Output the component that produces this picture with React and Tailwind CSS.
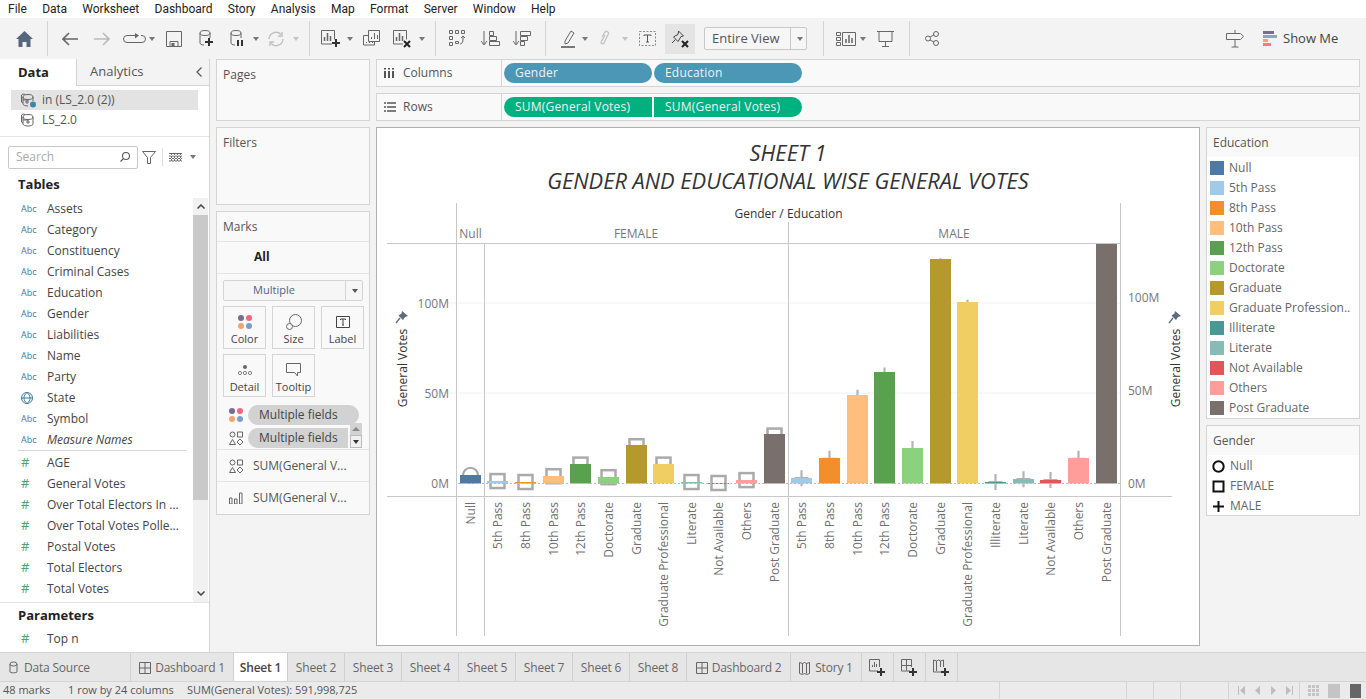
import React from 'react';

const FONT = "font-['Open_Sans','Noto_Sans',sans-serif]";

const Ic = ({ w = 16, h = 16, className = '', children, stroke = '#666', sw = 1.2 }) => (
    <svg width={w} height={h} viewBox={`0 0 ${w} ${h}`} fill="none" stroke={stroke} strokeWidth={sw} className={`shrink-0 ${className}`}>
        {children}
    </svg>
);

const Drop = ({ className = '', color = '#777' }) => (
    <svg width="6" height="4" viewBox="0 0 6 4" className={`shrink-0 ${className}`}><path d="M0 0h6L3 4z" fill={color} /></svg>
);

const Sep = ({ className = '' }) => <div className={`w-px h-[35px] bg-[#d4d4d4] shrink-0 ${className}`} />;

const Plus = ({ x, y }) => <path d={`M${x - 4} ${y}h8M${x} ${y - 4}v8`} stroke="#333" strokeWidth="2" />;
const Cross = ({ x, y }) => <path d={`M${x - 3} ${y - 3}l6 6M${x + 3} ${y - 3}l-6 6`} stroke="#222" strokeWidth="2" />;

const Toolbar = () => (
    <div className="h-[41px] bg-[#f3f3f3] flex items-center shrink-0">
        <Ic w={17} h={16} className="ml-[16px]" stroke="none"><path d="M8.500 0L17 8h-2.500v8H10.500v-5h-4v5H2.500V8H0z" fill="#56677c" /></Ic>
        <Sep className="ml-[14px]" />
        <Ic w={16} h={14} className="ml-[14px]" stroke="#666" sw={1.600}><path d="M16 7H1M7 1L1 7l6 6" /></Ic>
        <Ic w={16} h={14} className="ml-[16px]" stroke="#bbb" sw={1.600}><path d="M0 7h15M9 1l6 6-6 6" /></Ic>
        <Ic w={23} h={12} className="ml-[13px]" sw={1}><path d="M13 2.500H4a3.500 3.500 0 000 7h15a3.500 3.500 0 000-7h-1" /><path d="M12 0l4 2.500-4 3z" fill="#666" stroke="none" /></Ic>
        <Drop className="ml-[3px]" />
        <Ic w={16} h={16} className="ml-[11px]" sw={1}><path d="M.5.5h15v15H.5zM4 15.500v-5h8v5" /><path d="M5.500 12h3v3h-3z" fill="#666" stroke="none" /></Ic>
        <Ic w={15} h={17} className="ml-[17px]" sw={1}><ellipse cx="6" cy="3" rx="5" ry="2.500" /><path d="M1 3v10c0 1 1.500 2 4 2M11 3v5" /><Plus x={10} y={12} /></Ic>
        <Ic w={14} h={17} className="ml-[16px]" sw={1}><ellipse cx="6" cy="3" rx="5" ry="2.500" /><path d="M1 3v10c0 1 1.500 2 4 2M11 3v5" /><path d="M8 10v6M12 10v6" stroke="#333" strokeWidth="2" /></Ic>
        <Drop className="ml-[9px]" />
        <Ic w={18} h={16} className="ml-[8px]" stroke="#c0c0c0" sw={1.400}><path d="M2 8a7 7 0 0112-4.500M16 8a7 7 0 01-12 4.500" /><path d="M15 1v4h-4M3 15v-4h4" /></Ic>
        <Drop className="ml-[8px]" color="#c4c4c4" />
        <Sep className="ml-[10px]" />
        <Ic w={20} h={18} className="ml-[11px]" sw={1}><path d="M11 14H.5V.5h13v9" /><path d="M3.500 11V7M6.500 11V3M9.500 11V6" strokeWidth="1.500" /><Plus x={15} y={13} /></Ic>
        <Drop className="ml-[6px]" />
        <Ic w={17} h={17} className="ml-[10px]" sw={1}><path d="M5.500.5h11v11h-11zM.5 5.500H5M.5 5.500V15h11v-3" /><path d="M8.500 9V7M11.500 9V3M14.500 9V5M3.500 12v1M6.500 12v1M9.500 12v1" /></Ic>
        <Ic w={18} h={18} className="ml-[13px]" sw={1}><path d="M10 14H.5V.5h13v9" /><path d="M3.500 11V7M6.500 11V3M9.500 11V6" strokeWidth="1.500" /><Cross x={14} y={14} /></Ic>
        <Drop className="ml-[8px]" />
        <Sep className="ml-[10px]" />
        <Ic w={16} h={17} className="ml-[13px]" sw={1}><path d="M.5.5h3v3h-3zM6.500.5h3v3h-3zM12.500.5h3v3h-3zM.5 6.500h3v3h-3zM.5 12.500h3v3h-3zM6.500 13.500h3v-2h-3z" /><path d="M14 7v3c0 3-2 4-3 4" /><path d="M12 8l2-2 2 2" /></Ic>
        <Ic w={19} h={17} className="ml-[16px]" sw={1}><path d="M3 1v13M0 11l3 4 3-4" /><path d="M8.500 1.500h4v4h-4zM8.500 6.500h7v4h-7zM8.500 11.500h10v4h-10z" /></Ic>
        <Ic w={18} h={17} className="ml-[13px]" sw={1}><path d="M3 1v13M0 11l3 4 3-4" /><path d="M7.500 1.500h10v4h-10zM7.500 6.500h7v4h-7zM7.500 11.500h4v4h-4z" /></Ic>
        <Sep className="ml-[14px]" />
        <Ic w={14} h={18} className="ml-[15px]" sw={1}><path d="M4 11l6-10 3 2-6 10-3 1z" /><path d="M0 17h14" stroke="#777" strokeWidth="2" /></Ic>
        <Drop className="ml-[7px]" />
        <Ic w={12} h={17} className="ml-[11px]" stroke="#c4c4c4" sw={1.400}><path d="M3 7l3-5c1-1.500 4 0 3.500 1.500L5 13c-1 1.500-3.500.5-3-1l4-7" /></Ic>
        <Drop className="ml-[11px]" color="#c4c4c4" />
        <Ic w={17} h={15} className="ml-[11px]" sw={1}><path d="M.5.5h16v14H.5z" strokeDasharray="2 1.500" stroke="#888" /><path d="M5 5V4h7v1M8.500 4v7M7 11h3" stroke="#555" /></Ic>
        <div className="ml-[9px] w-[30px] h-[30px] bg-[#e4e4e4] flex items-center justify-center shrink-0">
            <Ic w={18} h={18} sw={1} stroke="#444"><path d="M7.500 1l5 5-2.500.5L8 10l-1 1.500-4.500-4.500L4 6l3-1.500z" /><path d="M4.500 9.500L1 13" /><Cross x={14} y={14} /></Ic>
        </div>
        <div className="ml-[9px] w-[103px] h-[23px] border border-[#c8c8c8] rounded-[2px] flex items-center shrink-0 bg-[#f6f6f6]">
            <span className="ml-[7px] text-[13px] text-[#555] leading-none w-[78px]">Entire View</span>
            <div className="w-px h-full bg-[#c8c8c8]" />
            <Drop className="ml-[6px]" />
        </div>
        <Sep className="ml-[16px]" />
        <Ic w={20} h={14} className="ml-[12px]" sw={1}><path d="M.5.5h4v3h-4zM.5 5.500h4v3h-4zM.5 10.500h4v3h-4zM6.500.5h13v13h-13z" /><path d="M10 11V7M13 11V3M16 11V6" strokeWidth="1.500" /></Ic>
        <Drop className="ml-[4px]" />
        <Ic w={17} h={17} className="ml-[11px]" sw={1}><path d="M0 1.500h17M2 1.500v10h13v-10M8.500 11.500v5M5 16.500h7" /></Ic>
        <Sep className="ml-[15px]" />
        <Ic w={14} h={15} className="ml-[15px]" sw={1}><circle cx="3" cy="7.500" r="2.500" /><circle cx="11" cy="3" r="2.500" /><circle cx="11" cy="12" r="2.500" /><path d="M5 6l4-2M5 9l4 2" /></Ic>
        <Ic w={18} h={18} className="ml-auto" sw={1}><path d="M.5 3.500h14l3 3-3 3H.5zM9 0v3M9 10v7M5.500 17h7" /></Ic>
        <div className="ml-[19px] w-[14px] flex flex-col gap-px shrink-0">
            <div className="h-[3px] w-[11px] bg-[#7b6a93]" />
            <div className="h-[3px] w-[14px] bg-[#8aa4c8]" />
            <div className="h-[3px] w-[5px] bg-[#f0a470]" />
            <div className="h-[3px] w-[8px] bg-[#f47a85]" />
        </div>
        <span className="ml-[6px] mr-[29px] text-[13px] text-[#444] leading-none w-[54px] whitespace-nowrap">Show Me</span>
    </div>
);

const DIMS = ['Assets', 'Category', 'Constituency', 'Criminal Cases', 'Education', 'Gender', 'Liabilities', 'Name', 'Party', 'State', 'Symbol', 'Measure Names'];
const MEASURES = ['AGE', 'General Votes', 'Over Total Electors  In ...', 'Over Total Votes Polle...', 'Postal Votes', 'Total Electors', 'Total Votes'];

const FieldRow = ({ name, type }) => (
    <div className="h-[21px] flex items-center shrink-0 whitespace-nowrap">
        <span className="w-[47px] pl-[21px] flex items-center">
            {type === 'abc' && <span className="text-[9px] font-medium text-[#3c7a9c] leading-none">Abc</span>}
            {type === 'geo' && (
                <Ic w={12} h={12} stroke="#3c7a9c" sw={1}><circle cx="6" cy="6" r="5.500" /><path d="M.5 6h11M6 .5c-4 3-4 8 0 11M6 .5c4 3 4 8 0 11" /></Ic>
            )}
            {type === 'num' && <span className="text-[13px] text-[#4da36f] leading-none">#</span>}
        </span>
        <span className={`text-[12px] text-[#444] leading-none ${name === 'Measure Names' ? 'italic' : ''}`}>{name}</span>
    </div>
);

const DataPanel = () => (
    <div className="w-[210px] bg-white border-r border-[#d4d4d4] flex flex-col shrink-0">
        <div className="h-[27px] flex shrink-0">
            <div className="w-[77px] text-[13px] font-bold text-[#222] flex items-center pl-[18px] border-r border-[#d4d4d4]">Data</div>
            <div className="flex-1 bg-[#f3f3f3] border-b border-[#d4d4d4] flex items-center pl-[13px] text-[13px] text-[#555] justify-between pr-[7px]">
                <span>Analytics</span>
                <Ic w={6} h={10} stroke="#555" sw={1.200}><path d="M5.500.5L1 5l4.500 4.500" /></Ic>
            </div>
        </div>
        <div className="h-[51px] border-b border-[#e4e4e4] pt-[4px] shrink-0">
            <div className="ml-[11px] w-[187px] h-[20px] bg-[#e3e3e3] flex items-center pl-[9px] text-[12px] text-[#555]">
                <Ic w={16} h={16} sw={1} className="mr-[6px]"><ellipse cx="8" cy="5" rx="5" ry="2.500" /><path d="M3 5v7c0 1 2 2 5 2M13 5v4M5 2.500C4 2 2 2 1.500 3v7l1.500 1M3 8h6M7 8v4M5 10h4" /><circle cx="13" cy="12.500" r="3" fill="#3c87a8" stroke="none" /></Ic>
                <span>in (LS_2.0 (2))</span>
            </div>
            <div className="ml-[11px] h-[20px] flex items-center pl-[9px] text-[12px] text-[#555]">
                <Ic w={16} h={16} sw={1} className="mr-[6px]"><ellipse cx="8" cy="5" rx="5" ry="2.500" /><path d="M3 5v7c0 1 2 2 5 2s5-1 5-2V5M5 2.500C4 2 2 2 1.500 3v7l1.500 1M3 8h6M8 8v4M6 10h4" /></Ic>
                <span>LS_2.0</span>
            </div>
        </div>
        <div className="h-[40px] flex items-center pl-[8px] shrink-0">
            <div className="w-[130px] h-[23px] border border-[#c8c8c8] rounded-[2px] flex items-center justify-between pl-[7px] pr-[7px]">
                <span className="text-[12px] text-[#aaa]">Search</span>
                <Ic w={10} h={10} stroke="#555" sw={1.100}><circle cx="6" cy="4" r="3.500" /><path d="M3.500 6.500L.5 9.500" /></Ic>
            </div>
            <Ic w={14} h={13} className="ml-[4px]" sw={1}><path d="M.5.5h13L8.500 6.500v6h-3v-6z" /></Ic>
            <div className="w-px h-[18px] bg-[#ddd] ml-[6px]" />
            <Ic w={13} h={9} className="ml-[6px]" sw={1}><path d="M0 .5h13M0 3h13M0 5.500h13M0 8h13M2.500 0v9M5.500 0v9M8.500 0v9M11.500 0v9" strokeDasharray="2 1" /></Ic>
            <Drop className="ml-[8px]" />
        </div>
        <div className="h-[21px] pl-[18px] text-[13px] font-bold text-[#222] flex items-center shrink-0 pb-[5px]">Tables</div>
        <div className="h-[405px] flex border-b border-[#e4e4e4] shrink-0">
            <div className="flex-1 flex flex-col">
                {DIMS.map(name => (
                    <FieldRow key={name} name={name} type={name === 'State' ? 'geo' : 'abc'} />
                ))}
                <div className="h-px bg-[#d4d4d4] ml-[18px] mr-[7px] mb-[1px] shrink-0" />
                {MEASURES.map(name => (
                    <FieldRow key={name} name={name} type="num" />
                ))}
            </div>
            <div className="w-[15px] mr-[1px] bg-[#f1f1f1] flex flex-col shrink-0">
                <div className="h-[17px] flex items-center justify-center"><Ic w={8} h={5} stroke="#444" sw={1.500}><path d="M.5 4.500L4 1l3.500 3.500" /></Ic></div>
                <div className="h-[285px] bg-[#c9c9c9]" />
                <div className="flex-1" />
                <div className="h-[17px] flex items-center justify-center"><Ic w={8} h={5} stroke="#444" sw={1.500}><path d="M.5.5L4 4l3.500-3.500" /></Ic></div>
            </div>
        </div>
        <div className="h-[25px] pl-[18px] pt-[1px] text-[13px] font-bold text-[#222] flex items-center shrink-0">Parameters</div>
        <FieldRow name="Top n" type="num" />
    </div>
);

const Card = ({ className = '', children }) => (
    <div className={`bg-[#f9f9f9] border border-[#d4d4d4] shrink-0 ${className}`}>{children}</div>
);

const MarkBtn = ({ label, children }) => (
    <div className="w-[43px] h-[43px] border border-[#d4d4d4] flex flex-col items-center justify-between pt-[6px] pb-[2px] text-[11px] leading-[14px] text-[#444]">
        <div className="h-[18px] flex items-center">{children}</div>
        <span>{label}</span>
    </div>
);

const Dots = () => (
    <div className="grid grid-cols-2 gap-[2px] w-[14px]">
        <i className="w-[6px] h-[6px] rounded-full bg-[#7b6a93]" />
        <i className="w-[6px] h-[6px] rounded-full bg-[#f4667a]" />
        <i className="w-[6px] h-[6px] rounded-full bg-[#f0a470]" />
        <i className="w-[6px] h-[6px] rounded-full bg-[#78a0cc]" />
    </div>
);

const Shapes = () => (
    <Ic w={14} h={14} stroke="#666" sw={1}><circle cx="3.500" cy="3.500" r="2.500" /><path d="M8.500 1h5v5h-5zM3.500 8.500l3 5h-6zM11 8l3 3-3 3-3-3z" /></Ic>
);

const MarksCard = () => (
    <Card className="h-[304px]">
        <div className="h-[30px] border-b border-[#e4e4e4] flex items-center pl-[6px] text-[12px] text-[#555]">Marks</div>
        <div className="h-[32px] border-b border-[#e4e4e4] flex items-center pl-[37px] pb-[2px] text-[12px] font-bold text-[#222]">All</div>
        <div className="mx-[6px] mt-[6px] h-[21px] w-[140px] border border-[#d4d4d4] rounded-[2px] flex items-center bg-[#f6f6f6]">
            <span className="w-[100px] text-center text-[11px] text-[#5d5d80]">Multiple</span>
            <div className="w-[21px]" />
            <div className="w-px h-full bg-[#d4d4d4]" />
            <Drop className="ml-[6px]" color="#555" />
        </div>
        <div className="ml-[6px] mt-[5px] grid grid-cols-[43px_43px_43px] gap-x-[6px] gap-y-[5px]">
            <MarkBtn label="Color"><Dots /></MarkBtn>
            <MarkBtn label="Size"><Ic w={16} h={16} sw={1}><circle cx="9.500" cy="6.500" r="6" /><circle cx="3.500" cy="12.500" r="3" fill="#f9f9f9" /></Ic></MarkBtn>
            <MarkBtn label="Label"><Ic w={14} h={12} sw={1} stroke="#444"><path d="M.5.5h13v11H.5zM4.500 4V3h5v1M7 3v6M6 9h2" /></Ic></MarkBtn>
            <MarkBtn label="Detail"><Ic w={14} h={12} sw={.8}><circle cx="7" cy="3" r="2" fill="#666" stroke="none" /><circle cx="2" cy="9" r="1.600" /><circle cx="7" cy="9" r="1.600" /><circle cx="12" cy="9" r="1.600" /></Ic></MarkBtn>
            <MarkBtn label="Tooltip"><Ic w={15} h={14} sw={1}><path d="M.5.5h14v9h-3v3.500l-3-3.500H.5z" /></Ic></MarkBtn>
        </div>
        <div className="h-[45px] mt-[8px] border-b border-[#e4e4e4] relative">
            <div className="flex items-center h-[20px] pl-[12px]">
                <Dots />
                <div className="ml-[5px] w-[111px] h-[20px] bg-[#d2d2d2] rounded-full pl-[11px] text-[12px] font-medium text-[#444] flex items-center whitespace-nowrap">Multiple fields</div>
            </div>
            <div className="flex items-center h-[20px] pl-[12px] mt-[3px]">
                <Shapes />
                <div className="ml-[5px] w-[100px] h-[20px] bg-[#d2d2d2] rounded-l-full pl-[11px] text-[12px] font-medium text-[#444] flex items-center whitespace-nowrap">Multiple fields</div>
            </div>
            <div className="absolute left-[133px] top-[18px] w-[12px] h-[25px] flex flex-col">
                <div className="h-[12px] bg-[#d2d2d2] flex items-center justify-center"><svg width="8" height="4"><path d="M0 4h8L4 0z" fill="#888" /></svg></div>
                <div className="h-[13px] bg-[#f0f0f0] border border-[#bbb] flex items-center justify-center"><Drop color="#333" /></div>
            </div>
        </div>
        <div className="h-[32px] border-b border-[#e4e4e4] flex items-center pl-[12px] text-[12px] text-[#555] whitespace-nowrap">
            <Shapes /><span className="ml-[10px]">SUM(General V...</span>
        </div>
        <div className="h-[32px] flex items-center pl-[12px] text-[12px] text-[#555] whitespace-nowrap">
            <Ic w={14} h={12} stroke="#666" sw={1}><path d="M.5 6h2.500v6H.5zM5.500 7H8v5H5.500zM10.500 1H13v11h-2.500z" /></Ic><span className="ml-[10px]">SUM(General V...</span>
        </div>
    </Card>
);

const Pill = ({ className = '', children }) => (
    <div className={`w-[148px] h-[20px] flex items-center pl-[11px] text-[12px] font-medium tracking-[0.2px] text-[#f2f2f2] whitespace-nowrap ${className}`}>{children}</div>
);

const Shelf = ({ label, icon, children }) => (
    <Card className="h-[28px] flex items-center">
        <div className="w-[125px] h-full border-r border-[#d4d4d4] flex items-center pl-[7px] shrink-0">
            <div className="w-[19px]">{icon}</div>
            <span className="text-[12px] text-[#555]">{label}</span>
        </div>
        <div className="flex gap-[2px] ml-[2px]">{children}</div>
    </Card>
);

const BARS = [
    { name: 'Null', color: '#4e79a7', x: 460, top: 475, mark: 'o' },
    { name: '5th Pass', color: '#a0cbe8', x: 487, top: 481, mark: 's' },
    { name: '8th Pass', color: '#f28e2b', x: 515, top: 482, mark: 's' },
    { name: '10th Pass', color: '#ffbe7d', x: 543, top: 476, mark: 's' },
    { name: '12th Pass', color: '#59a14f', x: 570, top: 464, mark: 's' },
    { name: 'Doctorate', color: '#8cd17d', x: 598, top: 477, mark: 's' },
    { name: 'Graduate', color: '#b6992d', x: 626, top: 445, mark: 's' },
    { name: 'Graduate Professional', color: '#f1ce63', x: 653, top: 464, mark: 's' },
    { name: 'Literate', color: '#86bcb6', x: 681, top: 482, mark: 's' },
    { name: 'Not Available', color: '#e15759', x: 708, top: 483, mark: 's' },
    { name: 'Others', color: '#ff9d9a', x: 736, top: 480, mark: 's' },
    { name: 'Post Graduate', color: '#79706e', x: 764, top: 434, mark: 's' },
    { name: '5th Pass', color: '#a0cbe8', x: 791, top: 478, mark: 'p' },
    { name: '8th Pass', color: '#f28e2b', x: 819, top: 458, mark: 'p' },
    { name: '10th Pass', color: '#ffbe7d', x: 847, top: 395, mark: 'p' },
    { name: '12th Pass', color: '#59a14f', x: 874, top: 372, mark: 'p' },
    { name: 'Doctorate', color: '#8cd17d', x: 902, top: 448, mark: 'p' },
    { name: 'Graduate', color: '#b6992d', x: 930, top: 259, mark: 'p' },
    { name: 'Graduate Professional', color: '#f1ce63', x: 957, top: 302, mark: 'p' },
    { name: 'Illiterate', color: '#499894', x: 985, top: 482, mark: 'p' },
    { name: 'Literate', color: '#86bcb6', x: 1013, top: 479, mark: 'p' },
    { name: 'Not Available', color: '#e15759', x: 1040, top: 480, mark: 'p' },
    { name: 'Others', color: '#ff9d9a', x: 1068, top: 458, mark: 'p' },
    { name: 'Post Graduate', color: '#79706e', x: 1096, top: 244, mark: 'p' },
];

// markers sit on the left axis, bars on the right one, so the scale differs a bit
const markerY = top => 483 - (483 - top) * 0.968;

const Marker = ({ cx, cy, mark }) => {
    if (mark === 'o') return <circle cx={cx} cy={cy} r="7.500" fill="none" stroke="#a8a8a8" strokeWidth="2.200" />;
    if (mark === 's') return <rect x={cx - 7} y={cy - 7} width="14" height="14" fill="none" stroke="#aaa" strokeWidth="2.500" />;
    return <path d={`M${cx - 7} ${cy}h14M${cx} ${cy - 8}v16`} stroke="#b4b4b4" strokeWidth="2.200" />;
};

const Axis = ({ x, anchor, ticks }) => ticks.map(([label, y]) => (
    <text key={label} x={x} y={y + 5} textAnchor={anchor} fontSize="12" fill="#777">{label}</text>
));

const Chart = () => (
    <svg width="822" height="442" viewBox="377 202 822 442" className="block" style={{ fontFamily: "'Open Sans', sans-serif" }}>
        <path d="M438 303h682M438 393h682" stroke="#f0f0f0" />
        <path d="M387 243.500h733M387 496.500h785" stroke="#c8c8c8" />
        <path d="M456.500 203v433M484.500 243v393M788.500 222v414M1120.500 203v433" stroke="#c8c8c8" />
        <text x="788.500" y="218" textAnchor="middle" fontSize="12" fill="#333">Gender / Education</text>
        <text x="470.500" y="238" textAnchor="middle" fontSize="12" fill="#777">Null</text>
        <text x="636" y="238" textAnchor="middle" fontSize="12" fill="#777">FEMALE</text>
        <text x="954" y="238" textAnchor="middle" fontSize="12" fill="#777">MALE</text>
        <Axis x={449} anchor="end" ticks={[['100M', 303], ['50M', 393], ['0M', 483]]} />
        <Axis x={1128} anchor="start" ticks={[['100M', 297], ['50M', 390], ['0M', 483]]} />
        {[[402, 368], [1175, 368]].map(([x, y]) => (
            <g key={x}>
                <text x={x} y={y} transform={`rotate(-90 ${x} ${y})`} textAnchor="middle" dominantBaseline="central" fontSize="12" fill="#333">General Votes</text>
                <path d={`M${x} ${311}l6 5-3 1-2 3-4.500-4.500 3-2z`} fill="#5d6b7c" />
                <path d={`M${x - 2} ${318}l-4 5`} stroke="#5d6b7c" strokeWidth="1.300" />
            </g>
        ))}
        {BARS.map(b => <Marker key={`m${b.x}`} cx={b.x + 10.500} cy={markerY(b.top)} mark={b.mark} />)}
        {BARS.map(b => <rect key={`b${b.x}`} x={b.x} y={b.top} width="21" height={Math.max(483.500 - b.top, 1)} fill={b.color} />)}
        <path d="M458 483.500h662" stroke="#bbb" strokeDasharray="2 2" />
        {BARS.map(b => {
            const x = b.x + 10;
            return (
                <text key={`t${b.x}`} x={x} y={502} transform={`rotate(-90 ${x} 502)`} textAnchor="end" dominantBaseline="central" fontSize="12" fill="#707070">{b.name}</text>
            );
        })}
    </svg>
);

const Viz = () => (
    <div className="w-[824px] h-[519px] bg-white border border-[#b0b0b0] shrink-0">
        <div className="h-[74px] text-center italic font-medium text-[#333] text-[21.800px] leading-[28px] pt-[11px] whitespace-nowrap">
            <div>SHEET 1</div>
            <div>GENDER AND EDUCATIONAL WISE GENERAL VOTES</div>
        </div>
        <Chart />
    </div>
);

const LEGEND = [
    ['Null', '#4e79a7'], ['5th Pass', '#a0cbe8'], ['8th Pass', '#f28e2b'], ['10th Pass', '#ffbe7d'], ['12th Pass', '#59a14f'],
    ['Doctorate', '#8cd17d'], ['Graduate', '#b6992d'], ['Graduate Profession..', '#f1ce63'], ['Illiterate', '#499894'],
    ['Literate', '#86bcb6'], ['Not Available', '#e15759'], ['Others', '#ff9d9a'], ['Post Graduate', '#79706e'],
];

const Legends = () => (
    <div className="w-[154px] ml-[6px] flex flex-col gap-[6px] shrink-0">
        <div className="border border-[#d4d4d4] bg-white h-[292px]">
            <div className="h-[29px] bg-[#f9f9f9] flex items-center pl-[6px] text-[12px] text-[#555]">Education</div>
            <div className="pt-[1px]">
                {LEGEND.map(([name, color]) => (
                    <div key={name} className="h-[20px] flex items-center pl-[3px] whitespace-nowrap">
                        <i className="w-[14px] h-[14px]" style={{ background: color }} />
                        <span className="ml-[5px] text-[12px] text-[#666]">{name}</span>
                    </div>
                ))}
            </div>
        </div>
        <div className="border border-[#d4d4d4] bg-white h-[91px]">
            <div className="h-[29px] bg-[#f9f9f9] flex items-center pl-[6px] text-[12px] text-[#555]">Gender</div>
            <div className="pt-[1px] text-[12px] text-[#666]">
                <div className="h-[20px] flex items-center pl-[5px]"><Ic w={13} h={13} stroke="#111" sw={2}><circle cx="6.500" cy="6.500" r="5.200" /></Ic><span className="ml-[5px]">Null</span></div>
                <div className="h-[20px] flex items-center pl-[5px]"><Ic w={13} h={13} stroke="#111" sw={2}><path d="M1.500 1.500h10v10h-10z" /></Ic><span className="ml-[5px]">FEMALE</span></div>
                <div className="h-[20px] flex items-center pl-[5px]"><Ic w={13} h={13} stroke="#111" sw={2}><path d="M1 6.500h11M6.500 1v11" /></Ic><span className="ml-[5px]">MALE</span></div>
            </div>
        </div>
    </div>
);

const TabItem = ({ w, active, children, className = 'justify-center' }) => (
    <div className={`${w} h-full border-r border-[#cfcfcf] flex items-center pt-[1px] text-[12px] tracking-[-0.2px] whitespace-nowrap shrink-0 ${className} ${active ? 'bg-white font-semibold text-[#444]' : 'text-[#666]'}`}>
        {children}
    </div>
);

const GridIc = () => <Ic w={12} h={12} sw={1}><path d="M.5.5h11v11H.5zM.5 6h11M6 .5v11" /></Ic>;
const StoryIc = () => <Ic w={11} h={14} sw={1}><path d="M.5 1.500l3 1 2-1 2 1 3-1v11l-3 1-2-1-2 1-3-1zM3.500 2.500v10M7.500 2.500v10" /></Ic>;

const Tabs = () => (
    <div className="h-[30px] bg-[#e6e6e6] border-t border-b border-[#d4d4d4] flex shrink-0">
        <TabItem w="w-[131px]" className="pl-[9px]"><Ic w={9} h={13} sw={1} className="mr-[6px]"><ellipse cx="4.500" cy="3" rx="3.500" ry="2" /><path d="M1 3v8c0 1 7 1 7 0V3" /></Ic>Data Source</TabItem>
        <TabItem w="w-[103px]"><GridIc /><span className="ml-[4px]">Dashboard 1</span></TabItem>
        <TabItem w="w-[54px]" active>Sheet 1</TabItem>
        <TabItem w="w-[57px]">Sheet 2</TabItem>
        <TabItem w="w-[57px]">Sheet 3</TabItem>
        <TabItem w="w-[57px]">Sheet 4</TabItem>
        <TabItem w="w-[57px]">Sheet 5</TabItem>
        <TabItem w="w-[57px]">Sheet 7</TabItem>
        <TabItem w="w-[57px]">Sheet 6</TabItem>
        <TabItem w="w-[57px]">Sheet 8</TabItem>
        <TabItem w="w-[104px]"><GridIc /><span className="ml-[4px]">Dashboard 2</span></TabItem>
        <TabItem w="w-[71px]"><StoryIc /><span className="ml-[5px]">Story 1</span></TabItem>
        <TabItem w="w-[32px]"><Ic w={17} h={17} sw={1}><path d="M9 12H.5V.5h10V8M3.500 8V6M5.500 8V3M7.500 8V5" /><Plus x={12} y={13} /></Ic></TabItem>
        <TabItem w="w-[32px]"><Ic w={17} h={17} sw={1}><path d="M9 12H.5V.5h10V8M.5 6.500h10M5.500.5v11" /><Plus x={12} y={13} /></Ic></TabItem>
        <TabItem w="w-[32px]"><Ic w={17} h={17} sw={1}><path d="M8 13H.5V1l3 1 2-1 2 1 3-1v7M3.500 2v10M7.500 2v6" /><Plus x={12} y={13} /></Ic></TabItem>
    </div>
);

const NavIc = ({ d }) => <svg width="7" height="9" className="shrink-0"><path d={d} fill="#bdbdbd" /></svg>;

const StatusBar = () => (
    <div className="h-[17px] bg-[#ebebeb] flex items-center text-[11px] text-[#555] shrink-0 whitespace-nowrap">
        <span className="w-[68px] pl-[3px]">48 marks</span>
        <span className="w-[119px]">1 row by 24 columns</span>
        <span className="w-[812px]">SUM(General Votes): 591,998,725</span>
        <div className="w-px h-full bg-[#d4d4d4]" />
        <div className="w-[126px]" />
        <div className="w-px h-full bg-[#d4d4d4]" />
        <div className="w-[26px]" />
        <div className="w-px h-full bg-[#d4d4d4]" />
        <div className="w-[26px]" />
        <div className="w-px h-full bg-[#d4d4d4]" />
        <div className="w-[47px]" />
        <div className="w-px h-full bg-[#d4d4d4]" />
        <div className="flex items-center gap-[9px] pl-[9px] w-[70px]">
            <NavIc d="M0 0h1v9H0zM7 0v9L2 4.500z" />
            <NavIc d="M6 0v9L1 4.500z" />
            <NavIc d="M1 0v9l5-4.500z" />
            <NavIc d="M0 0v9l5-4.500zM6 0h1v9H6z" />
        </div>
        <div className="w-px h-full bg-[#d4d4d4]" />
        <div className="flex items-center gap-[9px] pl-[8px]">
            <div className="grid grid-cols-3 gap-px w-[11px]">
                {[...Array(9)].map((_, i) => <i key={i} className="h-[3px] bg-[#c4c4c4]" />)}
            </div>
            <div className="w-[12px] h-[14px] bg-[#c4c4c4]" />
            <div className="w-[11px] h-[14px] bg-[#666] ml-[1px]" />
        </div>
    </div>
);

const App = () => (
    <div className={`w-[1366px] h-[699px] flex flex-col overflow-hidden bg-[#f3f3f3] ${FONT}`}>
        <div className="h-[18px] bg-white flex items-center text-[12px] text-[#222] shrink-0 whitespace-nowrap font-['Roboto',sans-serif] gap-[15.300px] pl-[8px]">
            <span>File</span>
            <span>Data</span>
            <span>Worksheet</span>
            <span>Dashboard</span>
            <span>Story</span>
            <span>Analysis</span>
            <span>Map</span>
            <span>Format</span>
            <span>Server</span>
            <span>Window</span>
            <span>Help</span>
        </div>
        <Toolbar />
        <div className="h-[593px] flex shrink-0">
            <DataPanel />
            <div className="w-[154px] ml-[6px] flex flex-col gap-[6px] shrink-0">
                <Card className="h-[62px] pl-[6px] pt-[6px] text-[12px] text-[#555]">Pages</Card>
                <Card className="h-[78px] pl-[6px] pt-[6px] text-[12px] text-[#555]">Filters</Card>
                <MarksCard />
            </div>
            <div className="ml-[6px] w-[984px] flex flex-col gap-[6px] shrink-0">
                <Shelf label="Columns" icon={<Ic w={10} h={10} stroke="#555" sw={2}><path d="M1 3v7M5 3v7M9 3v7" /><path d="M1 0v1.500M5 0v1.500M9 0v1.500" /></Ic>}>
                    <Pill className="bg-[#4b97b5] rounded-full">Gender</Pill>
                    <Pill className="bg-[#4b97b5] rounded-full">Education</Pill>
                </Shelf>
                <Shelf label="Rows" icon={<Ic w={12} h={10} stroke="#555" sw={1.400}><path d="M0 1h2M3 1h9M0 5h2M3 5h9M0 9h2M3 9h9" /></Ic>}>
                    <Pill className="bg-[#00b180] rounded-l-full">SUM(General Votes)</Pill>
                    <Pill className="bg-[#00b180] rounded-r-full">SUM(General Votes)</Pill>
                </Shelf>
                <div className="flex">
                    <Viz />
                    <Legends />
                </div>
            </div>
        </div>
        <Tabs />
        <StatusBar />
    </div>
);

export default App;
